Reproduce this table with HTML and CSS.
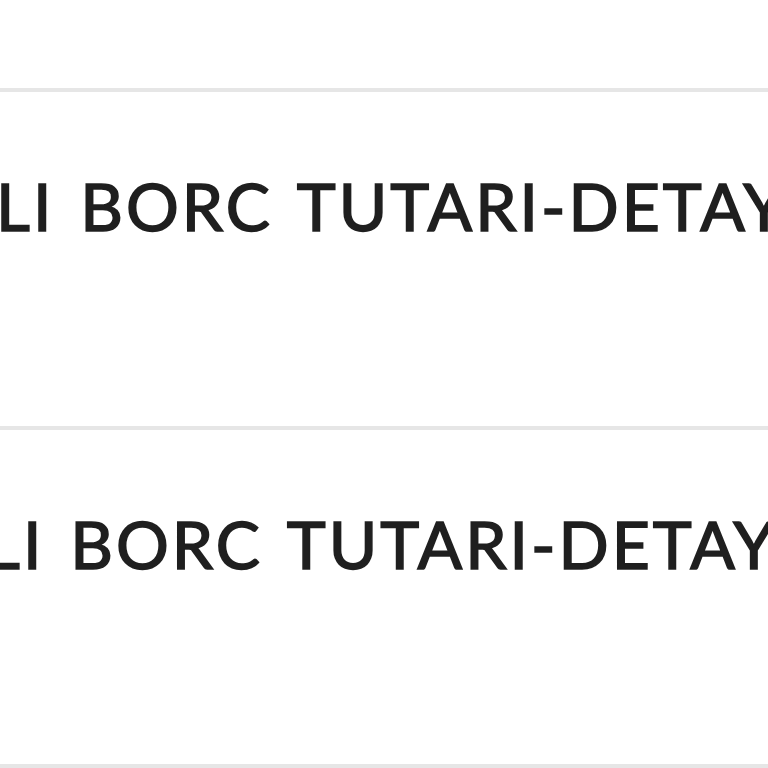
FILE: index.html
```html
<!DOCTYPE html>
<html>
<head>
<meta charset="utf-8">
<link rel="stylesheet" href="styles.css">
</head>
<body>
<div class="list">
  <div class="row"><div class="title title-a">LI BORC TUTARI-DETAY</div></div>
  <div class="row"><div class="title title-b">LI BORC TUTARI-DETAY</div></div>
  <div class="row"></div>
</div>
</body>
</html>
```
FILE: styles.css
```css
html, body {
  margin: 0;
  padding: 0;
  background: #ffffff;
  overflow: hidden;
}
.list {
  width: 768px;
  height: 768px;
  overflow: hidden;
  padding-top: 88px;
  box-sizing: border-box;
}
.row {
  height: 338px;
  box-sizing: border-box;
  border-top: 4px solid #e6e6e6;
  padding-top: 74px;
  overflow: hidden;
}
.title {
  font-family: "Lato", sans-serif;
  font-weight: 400;
  font-size: 66px;
  line-height: 80px;
  color: #1f1f1f;
  -webkit-text-stroke: 1.6px #1f1f1f;
  white-space: nowrap;
  letter-spacing: 3px;
  word-spacing: 6px;
}
.title-a { text-indent: -4px; }
.title-b { text-indent: -14px; }
```
